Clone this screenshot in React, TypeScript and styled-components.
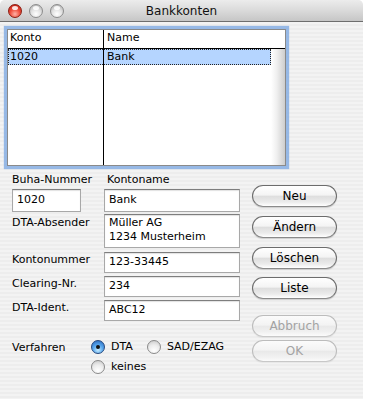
import React from "react";
import styled, { createGlobalStyle } from "styled-components";

const Global = createGlobalStyle`
  html, body { margin: 0; padding: 0; background: #ffffff; }
  body { font-family: "DejaVu Sans", "Liberation Sans", sans-serif; }
`;

const Window = styled.div`
  width: 363px;
  height: 399px;
  box-sizing: border-box;
  display: flex;
  flex-direction: column;
  border-radius: 5px 5px 0 0;
  overflow: hidden;
  background: repeating-linear-gradient(to bottom, #ededed 0px, #ededed 2px, #f3f3f3 2px, #f3f3f3 4px);
`;

const TitleBar = styled.div`
  position: relative;
  height: 22px;
  flex: none;
  box-sizing: border-box;
  border-bottom: 1px solid #6e6e6e;
  background: linear-gradient(to bottom, #ececec 0%, #dcdcdc 45%, #c6c6c6 100%);
  display: flex;
  align-items: center;
  justify-content: center;
`;

const Lights = styled.div`
  position: absolute;
  left: 8px;
  top: 4px;
  display: flex;
  gap: 7px;
`;

const Light = styled.span<{ $red?: boolean }>`
  width: 14px;
  height: 14px;
  box-sizing: border-box;
  border-radius: 50%;
  border: 1px solid ${(p) => (p.$red ? "#8a1d12" : "#8c8c8c")};
  background: ${(p) =>
    p.$red
      ? "radial-gradient(circle at 50% 75%, #ffb3a8 0%, #f0503e 45%, #b8170b 100%)"
      : "radial-gradient(circle at 50% 75%, #ffffff 0%, #e2e2e2 45%, #a9a9a9 100%)"};
  position: relative;
  &::after {
    content: "";
    position: absolute;
    left: 3px;
    top: 1px;
    width: 6px;
    height: 4px;
    border-radius: 50%;
    background: rgba(255, 255, 255, 0.85);
  }
`;

const Title = styled.div`
  font-size: 12px;
  color: #111;
  line-height: 14px;
  margin-top: 1px;
`;

const Body = styled.div`
  flex: 1;
  display: flex;
  flex-direction: column;
  padding: 7px 0 0 7px;
`;

const ListBox = styled.div`
  width: 279px;
  height: 137px;
  box-sizing: border-box;
  border: 1px solid #8a8a8a;
  background: #fff;
  box-shadow: 0 0 1px 3px rgba(120, 165, 225, 0.75);
  display: flex;
  flex-direction: column;
  font-size: 11px;
  color: #000;
`;

const ListHeader = styled.div`
  height: 19px;
  flex: none;
  box-sizing: border-box;
  border-bottom: 1px solid #000;
  display: flex;
`;

const Cell = styled.div<{ $first?: boolean }>`
  box-sizing: border-box;
  ${(p) => (p.$first ? "width: 96px; border-right: 1px solid #000;" : "flex: 1;")}
  padding-left: ${(p) => (p.$first ? 2 : 3)}px;
  line-height: 16px;
`;

const ListMain = styled.div`
  flex: 1;
  display: flex;
`;

const Rows = styled.div`
  flex: 1;
  display: flex;
  flex-direction: column;
`;

const Row = styled.div<{ $selected?: boolean; $fill?: boolean }>`
  display: flex;
  ${(p) => (p.$fill ? "flex: 1;" : "height: 16px; flex: none;")}
  background: ${(p) => (p.$selected ? "#b5d5ff" : "transparent")};
  outline: ${(p) => (p.$selected ? "1px dotted #222" : "none")};
  outline-offset: -1px;
`;

const Track = styled.div`
  width: 14px;
  flex: none;
  background: linear-gradient(to right, #ffffff 0%, #f0f0f0 40%, #cdcdcd 100%);
`;

const FormArea = styled.div`
  display: flex;
  margin-top: 7px;
  padding-left: 5px;
`;

const Form = styled.div`
  display: flex;
  flex-direction: column;
  width: 228px;
`;

const FieldRow = styled.div<{ $gap: number }>`
  display: grid;
  grid-template-columns: 92px 136px;
  align-items: start;
  margin-top: ${(p) => p.$gap}px;
`;

const Label = styled.div<{ $top?: number; $indent?: number }>`
  font-size: 11px;
  line-height: 14px;
  color: #000;
  padding-top: ${(p) => p.$top ?? 0}px;
  padding-left: ${(p) => p.$indent ?? 0}px;
  white-space: nowrap;
`;

const Field = styled.div<{ $w: number; $h: number }>`
  width: ${(p) => p.$w}px;
  height: ${(p) => p.$h}px;
  box-sizing: border-box;
  border: 1px solid #a8a8a8;
  border-top-color: #7e7e7e;
  background: #fff;
  box-shadow: inset 0 1px 1px rgba(0, 0, 0, 0.12);
  font-size: 11px;
  line-height: 14px;
  color: #000;
  padding: ${(p) => (p.$h > 22 ? 3 : 2)}px 4px 0;
  white-space: pre;
`;

const Textarea = styled(Field)`
  padding-top: 1px;
`;

const RadioSection = styled.div`
  display: flex;
  margin-top: 19px;
`;

const RadioGrid = styled.div`
  display: flex;
  flex-direction: column;
  gap: 6px;
`;

const RadioLine = styled.div`
  display: flex;
  gap: 14px;
`;

const RadioItem = styled.label`
  display: flex;
  align-items: center;
  gap: 6px;
  font-size: 11px;
  line-height: 14px;
  color: #000;
`;

const Radio = styled.span<{ $on?: boolean }>`
  width: 14px;
  height: 14px;
  box-sizing: border-box;
  border-radius: 50%;
  border: 1px solid ${(p) => (p.$on ? "#24487e" : "#8a8a8a")};
  background: ${(p) =>
    p.$on
      ? "radial-gradient(circle at 50% 75%, #c6ecff 0%, #5aa8ee 45%, #2463b8 100%)"
      : "radial-gradient(circle at 50% 80%, #ffffff 0%, #ececec 50%, #c4c4c4 100%)"};
  display: flex;
  align-items: center;
  justify-content: center;
  &::after {
    content: "";
    display: ${(p) => (p.$on ? "block" : "none")};
    width: 4px;
    height: 4px;
    border-radius: 50%;
    background: #111;
  }
`;

const Buttons = styled.div`
  display: flex;
  flex-direction: column;
  margin-top: 12px;
  margin-left: 12px;
`;

const Button = styled.button<{ $gap: number; $disabled?: boolean }>`
  width: 85px;
  height: 22px;
  margin-top: ${(p) => p.$gap}px;
  box-sizing: border-box;
  border-radius: 11px;
  border: 1px solid ${(p) => (p.$disabled ? "#bcbcbc" : "#6c6c6c")};
  border-bottom-color: ${(p) => (p.$disabled ? "#c8c8c8" : "#8a8a8a")};
  background: ${(p) =>
    p.$disabled
      ? "linear-gradient(to bottom, #fbfbfb 0%, #f3f3f3 45%, #e9e9e9 52%, #f1f1f1 80%, #fbfbfb 100%)"
      : "linear-gradient(to bottom, #ffffff 0%, #f4f4f4 45%, #dedede 52%, #ebebeb 80%, #ffffff 100%)"};
  box-shadow: 0 1px 1px rgba(0, 0, 0, ${(p) => (p.$disabled ? 0.05 : 0.15)});
  font-family: "DejaVu Sans", "Liberation Sans", sans-serif;
  font-size: 12px;
  line-height: 14px;
  color: ${(p) => (p.$disabled ? "#a3a3a3" : "#000")};
  padding: 0;
`;

export default function App() {
  return (
    <>
      <Global />
      <Window>
        <TitleBar>
          <Lights>
            <Light $red />
            <Light />
            <Light />
          </Lights>
          <Title>Bankkonten</Title>
        </TitleBar>
        <Body>
          <ListBox>
            <ListHeader>
              <Cell $first>Konto</Cell>
              <Cell>Name</Cell>
            </ListHeader>
            <ListMain>
              <Rows>
                <Row $selected>
                  <Cell $first>1020</Cell>
                  <Cell>Bank</Cell>
                </Row>
                <Row $fill>
                  <Cell $first />
                  <Cell />
                </Row>
              </Rows>
              <Track />
            </ListMain>
          </ListBox>
          <FormArea>
            <Form>
              <FieldRow $gap={0}>
                <Label>Buha-Nummer</Label>
                <Label $indent={3}>Kontoname</Label>
              </FieldRow>
              <FieldRow $gap={2}>
                <Field $w={69} $h={23}>1020</Field>
                <Field $w={136} $h={23}>Bank</Field>
              </FieldRow>
              <FieldRow $gap={2}>
                <Label $top={2} $indent={-1}>DTA-Absender</Label>
                <Textarea $w={136} $h={34}>{"Müller AG\n1234 Musterheim"}</Textarea>
              </FieldRow>
              <FieldRow $gap={4}>
                <Label $top={1}>Kontonummer</Label>
                <Field $w={136} $h={21}>123-33445</Field>
              </FieldRow>
              <FieldRow $gap={3}>
                <Label $top={1}>Clearing-Nr.</Label>
                <Field $w={136} $h={21}>234</Field>
              </FieldRow>
              <FieldRow $gap={3}>
                <Label $top={1}>DTA-Ident.</Label>
                <Field $w={136} $h={21}>ABC12</Field>
              </FieldRow>
              <RadioSection>
                <Label $top={1} style={{ width: 79 }}>Verfahren</Label>
                <RadioGrid>
                  <RadioLine>
                    <RadioItem>
                      <Radio $on />
                      DTA
                    </RadioItem>
                    <RadioItem>
                      <Radio />
                      SAD/EZAG
                    </RadioItem>
                  </RadioLine>
                  <RadioItem>
                    <Radio />
                    keines
                  </RadioItem>
                </RadioGrid>
              </RadioSection>
            </Form>
            <Buttons>
              <Button $gap={0}>Neu</Button>
              <Button $gap={9}>Ändern</Button>
              <Button $gap={9}>Löschen</Button>
              <Button $gap={8}>Liste</Button>
              <Button $gap={16} $disabled>Abbruch</Button>
              <Button $gap={3} $disabled>OK</Button>
            </Buttons>
          </FormArea>
        </Body>
      </Window>
    </>
  );
}
